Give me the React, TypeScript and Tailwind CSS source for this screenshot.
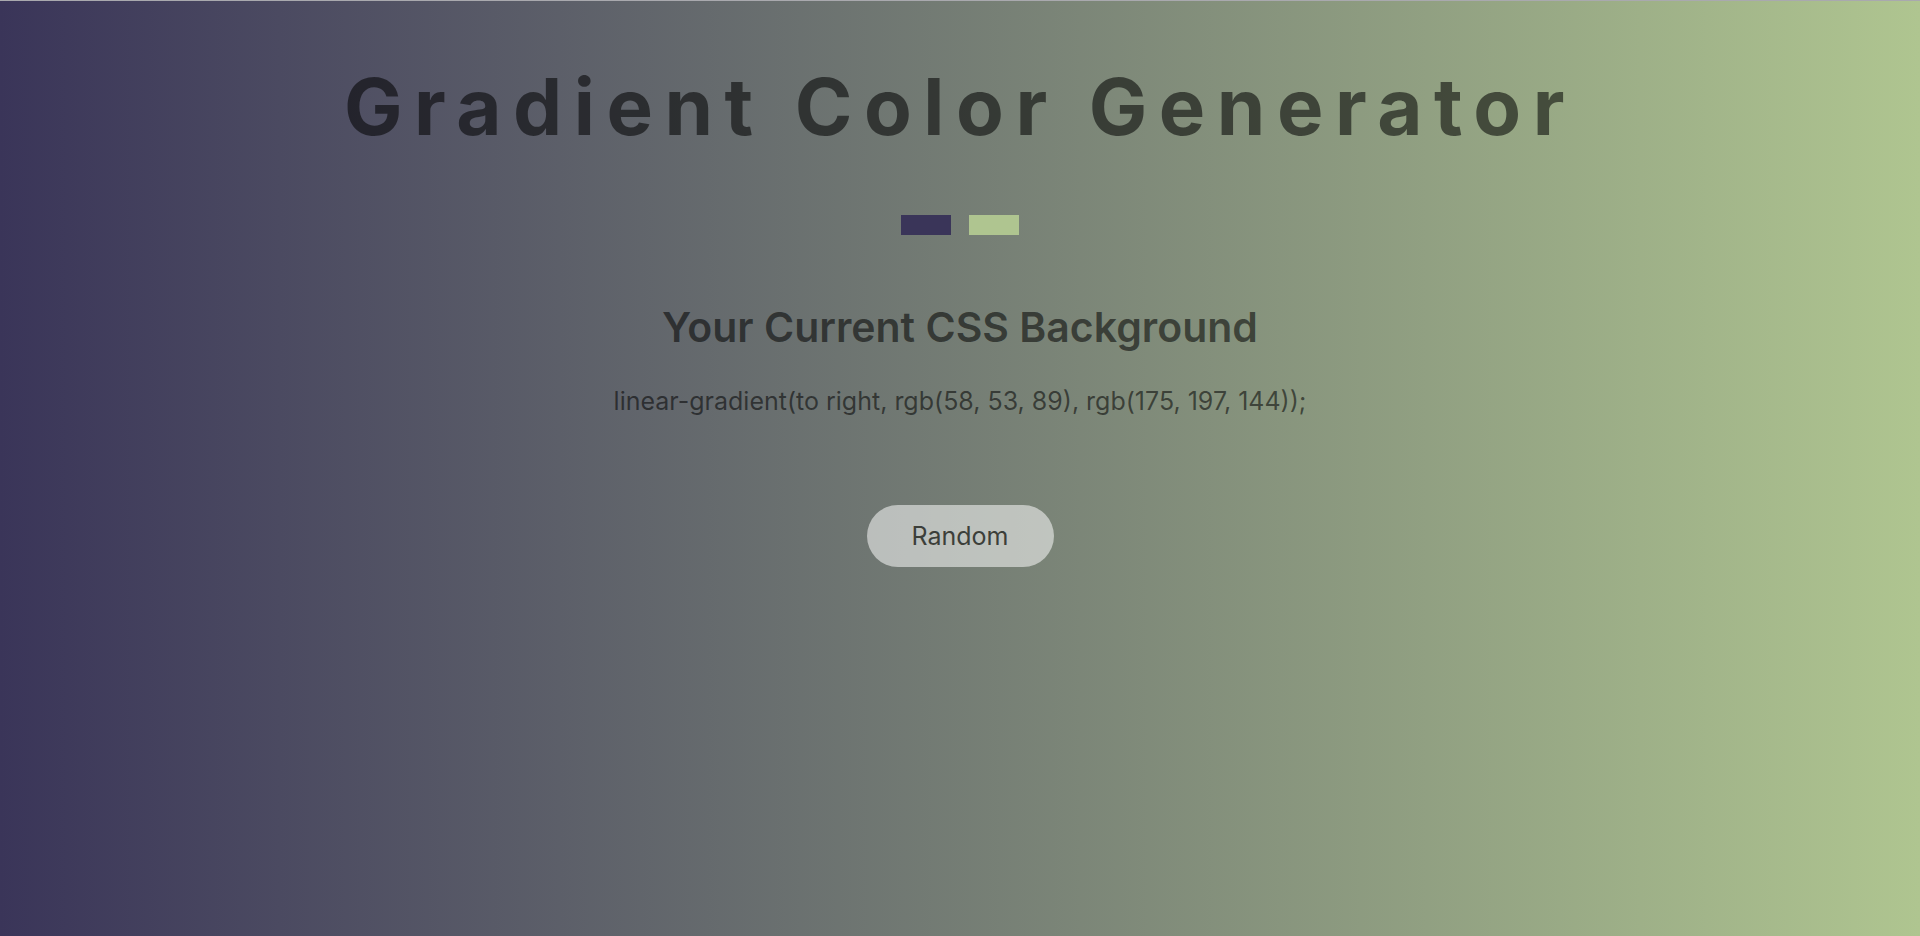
export default function App() {
  const from = "rgb(58, 53, 89)";
  const to = "rgb(175, 197, 144)";

  return (
    <div className="min-h-screen w-full border-t border-[#a9a9ae] bg-[linear-gradient(to_right,#3a3559,#afc590)] font-['Inter','Liberation_Sans',sans-serif] text-[rgba(0,0,0,0.55)]">
      <div className="flex flex-col items-center pt-[59px]">
        <h1 className="text-[78px] font-bold leading-[1.2] tracking-[0.148em]">
          Gradient Color Generator
        </h1>

        {/* color pickers */}
        <div className="mt-[61px] flex items-center gap-[18px]">
          <div className="h-[20px] w-[50px] bg-[#3a3559]" />
          <div className="h-[20px] w-[50px] bg-[#afc590]" />
        </div>

        <h2 className="mt-[68px] text-[41px] font-semibold leading-[1.2]">
          Your Current CSS Background
        </h2>

        <p className="mt-[33px] text-[25px] leading-[1.3]">
          linear-gradient(to right, {from}, {to});
        </p>

        <button className="mt-[88px] h-[62px] w-[187px] rounded-full bg-[rgba(255,255,255,0.53)] text-[25px] text-[#3c3f3a]">
          Random
        </button>
      </div>
    </div>
  );
}
